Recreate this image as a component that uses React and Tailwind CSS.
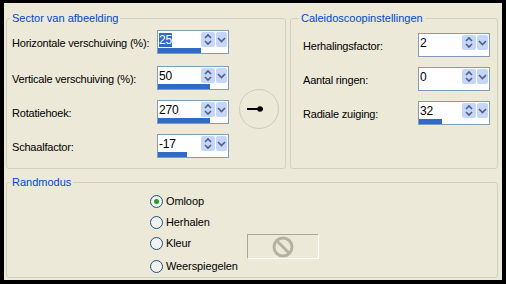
import React from "react";

// Spinner field with a small progress bar under the value
const Spin = ({ value, bar = 0, selected = false }) => (
  <div className="w-[72px] h-[24px] border border-[#7F9DB9] bg-white flex flex-col">
    <div className="flex h-[17px] pt-[1px]">
      <div className="flex-1 pl-[1px] pt-[1px] text-[12px] leading-[14px] text-black">
        <span className={selected ? "bg-[#316AC5] text-white" : ""}>{value}</span>
      </div>
      <div className="w-[14px] h-[15px] bg-[#C6D6FA] rounded-[2px] flex items-center justify-center">
        <svg width="10" height="13" viewBox="0 0 10 13">
          <path d="M2 5 L5 2 L8 5" fill="none" stroke="#4D6185" strokeWidth="1.6" />
          <path d="M2 8 L5 11 L8 8" fill="none" stroke="#4D6185" strokeWidth="1.6" />
        </svg>
      </div>
      <div className="w-[11px] h-[15px] ml-[1px] mr-[1px] bg-[#C6D6FA] rounded-[2px] flex items-center justify-center">
        <svg width="9" height="9" viewBox="0 0 9 9">
          <path d="M1 3 L4.5 6.5 L8 3" fill="none" stroke="#4D6185" strokeWidth="1.6" />
        </svg>
      </div>
    </div>
    <div className="flex-1 flex items-end">
      <div className="h-[5px] bg-[#316AC5]" style={{ width: bar }} />
    </div>
  </div>
);

const Radio = ({ label, checked = false }) => (
  <div className="flex items-center h-[21px]">
    <div className="w-[13px] h-[13px] rounded-full border border-[#1C5180] bg-[#F2F2EE] flex items-center justify-center">
      {checked && <div className="w-[5px] h-[5px] rounded-full bg-[#21A121]" />}
    </div>
    <span className="ml-[3px]">{label}</span>
  </div>
);

const Legend = ({ children, className }) => (
  <legend className={`px-[2px] text-[#0046D5] leading-[13px] ${className}`}>{children}</legend>
);

export default function App() {
  return (
    <div className="w-[506px] h-[284px] bg-black pt-[3px] pl-[4px] pr-[4px] pb-[4px]">
      <div
        className="h-full bg-[#ECE9D8] flex flex-col pl-[2px] pr-[4px] pt-[9px] pb-[2px] text-[11px] text-black"
        style={{ fontFamily: '"Liberation Sans", Arial, sans-serif' }}
      >
        <div className="flex gap-[4px]">
          {/* Sector van afbeelding */}
          <fieldset className="w-[280px] h-[157px] border border-[#D0D0BF] rounded-[3px]">
            <Legend className="ml-[3px]">Sector van afbeelding</Legend>
            <div className="flex pl-[5px] tracking-[-0.2px]">
              <div className="flex flex-col">
                <div className="flex items-center mt-[5px]">
                  <span className="w-[145px] pt-[3px]">Horizontale verschuiving (%):</span>
                  <Spin value="25" bar={43} selected />
                </div>
                <div className="flex items-center mt-[12px]">
                  <span className="w-[145px] pt-[3px]">Verticale verschuiving (%):</span>
                  <Spin value="50" bar={52} />
                </div>
                <div className="flex items-center mt-[10px]">
                  <span className="w-[145px] pt-[3px]">Rotatiehoek:</span>
                  <Spin value="270" bar={52} />
                </div>
                <div className="flex items-center mt-[10px]">
                  <span className="w-[145px] pt-[3px]">Schaalfactor:</span>
                  <Spin value="-17" bar={29} />
                </div>
              </div>
              <div className="ml-[10px] mt-[64px] w-[40px] h-[40px] rounded-full border border-[#CDCABA] flex items-center justify-center">
                <svg width="24" height="8" viewBox="0 0 24 8">
                  <path d="M0 4 H16" stroke="#000" strokeWidth="2" />
                  <circle cx="13" cy="4" r="2.8" fill="#000" />
                </svg>
              </div>
            </div>
          </fieldset>

          {/* Caleidoscoopinstellingen */}
          <fieldset className="flex-1 h-[157px] border border-[#D0D0BF] rounded-[3px]">
            <Legend className="ml-[8px]">Caleidoscoopinstellingen</Legend>
            <div className="flex flex-col pl-[12px] tracking-[-0.2px]">
              <div className="flex items-center mt-[8px]">
                <span className="w-[115px] pt-[2px]">Herhalingsfactor:</span>
                <Spin value="2" />
              </div>
              <div className="flex items-center mt-[10px]">
                <span className="w-[115px] pt-[2px]">Aantal ringen:</span>
                <Spin value="0" />
              </div>
              <div className="flex items-center mt-[10px]">
                <span className="w-[115px] pt-[2px]">Radiale zuiging:</span>
                <Spin value="32" bar={23} />
              </div>
            </div>
          </fieldset>
        </div>

        {/* Randmodus */}
        <fieldset className="flex-1 mt-[7px] border border-[#D0D0BF] rounded-[3px]">
          <Legend className="ml-[3px]">Randmodus</Legend>
          <div className="flex pl-[143px] mt-[2px] tracking-[-0.1px]">
            <div className="w-[97px] flex flex-col">
              <Radio label="Omloop" checked />
              <Radio label="Herhalen" />
              <Radio label="Kleur" />
              <div className="mt-[2px]">
                <Radio label="Weerspiegelen" />
              </div>
            </div>
            <div className="mt-[43px] w-[72px] h-[25px] border border-t-[#ACA899] border-l-[#ACA899] border-b-white border-r-white flex items-center justify-center">
              <svg width="24" height="24" viewBox="0 0 24 24">
                <circle cx="12" cy="12" r="9" fill="none" stroke="#B5B2A3" strokeWidth="3" />
                <path d="M5.8 5.8 L18.2 18.2" stroke="#B5B2A3" strokeWidth="3" />
              </svg>
            </div>
          </div>
        </fieldset>
      </div>
    </div>
  );
}
